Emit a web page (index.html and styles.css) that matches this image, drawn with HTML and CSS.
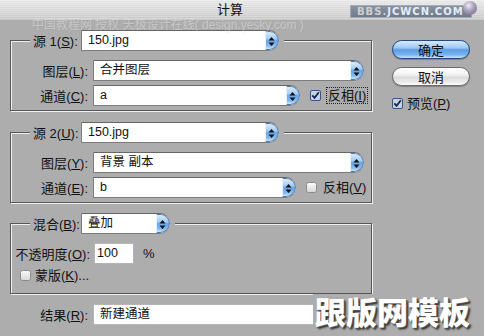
FILE: index.html
```html
<!DOCTYPE html>
<html lang="zh-CN">
<head>
<meta charset="utf-8">
<title>计算</title>
<link rel="stylesheet" href="styles.css">
</head>
<body>
<div class="dialog">
  <div class="titlebar"><span class="title">计算</span></div>
  <div class="badge"><span class="bbs">BBS.</span>JCWCN.COM</div>
  <div class="orb"></div>
  <div class="wm-line">中国教程网 授权 天极设计在线( design.yesky.com )</div>

  <div class="content">
    <div class="left">
      <div class="group g1">
        <div class="group-head">
          <span class="head-label">源 1(<u>S</u>):</span>
          <div class="select w-src"><span class="val">150.jpg</span><span class="arrow"><svg width="13" height="19" viewBox="0 0 13 19"><path d="M6.5 5 L9.5 8.5 L3.5 8.5 Z M3.5 10.5 L9.5 10.5 L6.5 14 Z" fill="#111"/></svg></span></div>
        </div>
        <div class="row">
          <span class="label">图层(<u>L</u>):</span>
          <div class="select w-layer"><span class="val">合并图层</span><span class="arrow"><svg width="13" height="19" viewBox="0 0 13 19"><path d="M6.5 5 L9.5 8.5 L3.5 8.5 Z M3.5 10.5 L9.5 10.5 L6.5 14 Z" fill="#111"/></svg></span></div>
        </div>
        <div class="row">
          <span class="label">通道(<u>C</u>):</span>
          <div class="select w-chan1"><span class="val">a</span><span class="arrow"><svg width="13" height="19" viewBox="0 0 13 19"><path d="M6.5 5 L9.5 8.5 L3.5 8.5 Z M3.5 10.5 L9.5 10.5 L6.5 14 Z" fill="#111"/></svg></span></div>
          <span class="check c1"><svg width="11" height="11" viewBox="0 0 11 11"><rect x="0.5" y="0.5" width="10" height="10" rx="1.5" fill="#c6d4ea" stroke="#3b5482"/><path d="M2.3 5.3 L4.6 7.9 L8.8 2.2" fill="none" stroke="#15264d" stroke-width="1.8"/></svg></span>
          <span class="check-label focus">反相(<u>I</u>)</span>
        </div>
      </div>

      <div class="group g2">
        <div class="group-head">
          <span class="head-label">源 2(<u>U</u>):</span>
          <div class="select w-src"><span class="val">150.jpg</span><span class="arrow"><svg width="13" height="19" viewBox="0 0 13 19"><path d="M6.5 5 L9.5 8.5 L3.5 8.5 Z M3.5 10.5 L9.5 10.5 L6.5 14 Z" fill="#111"/></svg></span></div>
        </div>
        <div class="row">
          <span class="label">图层(<u>Y</u>):</span>
          <div class="select w-layer"><span class="val">背景 副本</span><span class="arrow"><svg width="13" height="19" viewBox="0 0 13 19"><path d="M6.5 5 L9.5 8.5 L3.5 8.5 Z M3.5 10.5 L9.5 10.5 L6.5 14 Z" fill="#111"/></svg></span></div>
        </div>
        <div class="row">
          <span class="label">通道(<u>E</u>):</span>
          <div class="select w-chan2"><span class="val">b</span><span class="arrow"><svg width="13" height="19" viewBox="0 0 13 19"><path d="M6.5 5 L9.5 8.5 L3.5 8.5 Z M3.5 10.5 L9.5 10.5 L6.5 14 Z" fill="#111"/></svg></span></div>
          <span class="check c2"><svg width="11" height="11" viewBox="0 0 11 11"><defs><linearGradient id="ug" x1="0" y1="0" x2="0" y2="1"><stop offset="0" stop-color="#fbfbfb"/><stop offset="1" stop-color="#d6d6d6"/></linearGradient></defs><rect x="0.5" y="0.5" width="10" height="10" rx="2" fill="url(#ug)" stroke="#8a8a8a"/></svg></span>
          <span class="check-label cl2">反相(<u>V</u>)</span>
        </div>
      </div>

      <div class="group g3">
        <div class="group-head">
          <span class="head-label">混合(<u>B</u>):</span>
          <div class="select w-blend"><span class="val">叠加</span><span class="arrow"><svg width="13" height="19" viewBox="0 0 13 19"><path d="M6.5 5 L9.5 8.5 L3.5 8.5 Z M3.5 10.5 L9.5 10.5 L6.5 14 Z" fill="#111"/></svg></span></div>
        </div>
        <div class="row">
          <span class="label wide">不透明度(<u>O</u>):</span>
          <div class="input w-opacity">100</div>
          <span class="pct">%</span>
        </div>
        <div class="row small">
          <span class="check c3"><svg width="11" height="11" viewBox="0 0 11 11"><rect x="0.5" y="0.5" width="10" height="10" rx="2" fill="url(#ug)" stroke="#8a8a8a"/></svg></span>
          <span class="check-label cl3">蒙版(<u>K</u>)...</span>
        </div>
      </div>

      <div class="row result">
        <span class="label rl">结果(<u>R</u>):</span>
        <div class="input w-result">新建通道</div>
      </div>
    </div>

    <div class="right">
      <div class="btn primary">确定</div>
      <div class="btn">取消</div>
      <div class="preview">
        <span class="check"><svg width="11" height="11" viewBox="0 0 11 11"><rect x="0.5" y="0.5" width="10" height="10" rx="1.5" fill="#c6d4ea" stroke="#3b5482"/><path d="M2.3 5.3 L4.6 7.9 L8.8 2.2" fill="none" stroke="#15264d" stroke-width="1.8"/></svg></span>
        <span class="check-label">预览(<u>P</u>)</span>
      </div>
    </div>
  </div>

  <div class="wm-big">跟版网模板</div>
</div>
</body>
</html>
```

FILE: styles.css
```css
* { box-sizing: border-box; }

body {
  margin: 0;
  width: 484px;
  height: 336px;
  overflow: hidden;
  background: #adadad;
  font-family: "Liberation Sans", "Noto Sans CJK SC", sans-serif;
  font-size: 13px;
  color: #111;
}

.dialog {
  position: relative;
  width: 484px;
  height: 336px;
  background: #adadad;
}

.titlebar {
  height: 20px;
  display: flex;
  align-items: center;
  justify-content: center;
  padding-right: 24px;
  background:
    repeating-linear-gradient(to bottom, rgba(255,255,255,0.18) 0 1px, rgba(0,0,0,0.025) 1px 2px),
    linear-gradient(#ececec, #cbcbcb);
  font-size: 13px;
  line-height: 20px;
}

.badge {
  position: absolute;
  left: 350px;
  top: 5px;
  width: 122px;
  height: 13px;
  background: linear-gradient(#8a93a1, #6f7987);
  border: 1px solid #a3abb7;
  display: flex;
  align-items: center;
  padding-left: 6px;
  font-family: "DejaVu Sans", sans-serif;
  font-weight: bold;
  font-size: 10px;
  letter-spacing: 1px;
  color: #e4ecfa;
  line-height: 11px;
}
.badge .bbs { color: #cfcfcf; }

.orb {
  position: absolute;
  left: 463px;
  top: 1px;
  width: 14px;
  height: 14px;
  border-radius: 50%;
  background: radial-gradient(circle at 40% 32%, #f0ecf6 0, #a59cb8 45%, #6b6480 100%);
}

.wm-line {
  position: absolute;
  left: 32px;
  top: 18px;
  font-size: 12px;
  line-height: 14px;
  white-space: nowrap;
  color: rgba(240,240,240,0.42);
  text-shadow: 1px 1px 0 rgba(0,0,0,0.06);
}

.content {
  display: flex;
  padding-left: 10px;
}

.left {
  width: 362px;
  padding-top: 20px;
}

.right {
  width: 78px;
  margin-left: 20px;
  padding-top: 20px;
  display: flex;
  flex-direction: column;
}

/* etched group boxes */
.group {
  border: 1px solid #575757;
  box-shadow: inset 1px 1px 0 #f0f0f0, 1px 1px 0 #f0f0f0;
  padding-bottom: 4px;
}
.g2 { margin-top: 21px; }
.g3 { margin-top: 20px; padding-bottom: 10px; }

.group-head {
  display: flex;
  align-items: center;
  width: fit-content;
  height: 21px;
  margin: -11px 0 9px 19px;
  padding: 0 5px 0 3px;
  background: #adadad;
}
.head-label { width: 48px; white-space: nowrap; }

.row {
  display: flex;
  align-items: center;
  height: 21px;
}
.row + .row { margin-top: 4px; }
.row.small { height: 16px; margin-top: 3px; padding-left: 9px; }

.label {
  width: 77px;
  margin-right: 5px;
  text-align: right;
  white-space: nowrap;
}
.label.wide { width: 79px; margin-right: 4px; }

.select {
  display: flex;
  height: 21px;
  background: #fff;
  border: 1px solid #7c7c7c;
  border-top-color: #666;
  border-right: none;
  border-radius: 0 10px 10px 0;
  overflow: hidden;
}
.select .val {
  flex: 1;
  padding-left: 6px;
  line-height: 19px;
  font-size: 12.5px;
  white-space: nowrap;
}
.select .arrow {
  width: 14px;
  height: 19px;
  display: flex;
  border-radius: 0 10px 10px 0;
  border: 1px solid #4f79a8;
  border-left: 1px solid #e6f1fc;
  background: linear-gradient(#dbecfc 0%, #a6cdf2 38%, #6aa6e6 52%, #82b8ef 80%, #c8e4fc 100%);
}
.select .arrow svg { display: block; margin-left: -1px; }

.w-src { width: 198px; }
.w-layer { width: 271px; }
.w-chan1 { width: 207px; }
.w-chan2 { width: 203px; }
.w-blend { width: 89px; }

.check { display: flex; width: 11px; height: 11px; }
.check svg { display: block; }
.c1 { margin-left: 10px; }
.c2 { margin-left: 10px; }

.check-label { margin-left: 5px; white-space: nowrap; line-height: 15px; }
.focus { border: 1px dotted #222; padding: 0 1px; }
.cl2 { margin-left: 6px; }
.cl3 { margin-left: 4px; }

.input {
  height: 21px;
  background: #fff;
  border: 1px solid #b4b4b4;
  padding-left: 2px;
  line-height: 19px;
  font-size: 12.5px;
}
.w-opacity { width: 40px; }
.w-result { width: 272px; padding-left: 6px; }
.pct { margin-left: 9px; }

.row.result { margin-top: 10px; }
.label.rl { width: 78px; }

.btn {
  height: 19px;
  border-radius: 10px;
  border: 1px solid #6a6a6a;
  background: linear-gradient(#ffffff 0%, #f2f2f2 40%, #dcdcdc 55%, #ececec 85%, #ffffff 100%);
  display: flex;
  align-items: center;
  justify-content: center;
  font-size: 13px;
  box-shadow: 0 1px 1px rgba(0,0,0,0.25);
}
.btn.primary {
  border-color: #27487a;
  background: linear-gradient(#d5ebfd 0%, #9dcaf2 40%, #5c9ce0 52%, #78b3ee 80%, #c7e5ff 100%);
}
.btn + .btn { margin-top: 8px; }

.preview {
  display: flex;
  align-items: center;
  margin-top: 10px;
  height: 14px;
}
.preview .check-label { margin-left: 4px; }

.wm-big {
  position: absolute;
  left: 313px;
  top: 294px;
  width: 168px;
  height: 34px;
  padding-left: 2px;
  background: #adadad;
  font-family: "Noto Sans CJK SC", sans-serif;
  font-weight: 900;
  font-size: 31px;
  line-height: 34px;
  color: #fff;
  letter-spacing: 0;
  white-space: nowrap;
  text-shadow: 1px 1px 0 #555, 2px 2px 2px #222;
}
```
